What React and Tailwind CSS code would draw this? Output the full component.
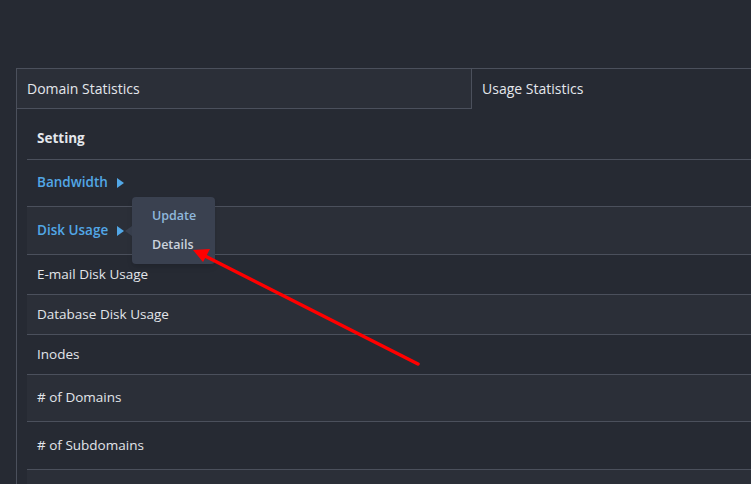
import React from "react";

const rows = [
  { label: "Bandwidth", link: true, h: "h-[47px]", bg: "bg-[#262a33]" },
  { label: "Disk Usage", link: true, h: "h-[48px]", bg: "bg-[#2b2f38]", menu: true },
  { label: "E-mail Disk Usage", h: "h-[40px]", bg: "bg-[#262a33]" },
  { label: "Database Disk Usage", h: "h-[40px]", bg: "bg-[#2b2f38]" },
  { label: "Inodes", h: "h-[40px]", bg: "bg-[#262a33]" },
  { label: "# of Domains", h: "h-[47px]", bg: "bg-[#2b2f38]" },
  { label: "# of Subdomains", h: "h-[48px]", bg: "bg-[#262a33]" },
  { label: "", h: "h-[40px]", bg: "bg-[#2b2f38]" },
];

function Tri({ className }) {
  return (
    <svg width="7" height="10" viewBox="0 0 7 10" className={className}>
      <path d="M0 0 L7 5 L0 10 Z" fill="currentColor" />
    </svg>
  );
}

export default function App() {
  return (
    <div
      className="relative w-[751px] h-[484px] overflow-hidden bg-[#262a33] text-[#e4e7ec]"
      style={{ fontFamily: '"Open Sans", "Noto Sans", sans-serif' }}
    >
      <div className="pt-[68px] pl-4">
        <div className="w-[910px] border-t border-l border-[#4b505c]">
          <div className="flex h-10">
            <div className="w-[455px] flex items-center px-[10px] pb-[1px] bg-[#2b2f38] border-r border-b border-[#4b505c] text-[14px] font-medium">
              Domain Statistics
            </div>
            <div className="flex-1 flex items-center px-[10px] pb-[1px] text-[14px] font-medium">
              Usage Statistics
            </div>
          </div>
          <div className="pt-[10px] pl-[10px]">
            <div className="h-[41px] flex items-center px-[10px] pb-[1px] border-b border-[#4b505c] text-[13.5px] font-bold">
              Setting
            </div>
            {rows.map((r, i) => (
              <div
                key={i}
                className={`relative ${r.h} ${r.bg} flex items-center px-[10px] pb-[1px] border-b border-[#4b505c] text-[13.5px]`}
              >
                {r.link ? (
                  <span className="flex items-center gap-[9px] text-[#52a7e6] font-semibold">
                    {r.label}
                    <Tri className="text-[#52a7e6] mt-[1px]" />
                  </span>
                ) : (
                  <span className="font-medium text-[#e2e5ea]">{r.label}</span>
                )}
                {r.menu && (
                  <div className="absolute left-[98px] top-[-10px] z-10 flex items-center">
                    <svg width="7" height="10" viewBox="0 0 7 10" className="text-[#3a4150] mt-[1px] shrink-0">
                      <path d="M7 0 L0 5 L7 10 Z" fill="currentColor" />
                    </svg>
                    <div className="w-[83px] h-[67px] rounded-[4px] bg-[#3a4150] flex flex-col justify-center gap-[10px] pl-[20px] text-[12.5px] font-semibold shadow-md">
                      <span className="text-[#8fb8dc]">Update</span>
                      <span className="text-[#cbd3de]">Details</span>
                    </div>
                  </div>
                )}
              </div>
            ))}
          </div>
        </div>
      </div>
      <svg
        className="absolute left-0 top-0 z-20 pointer-events-none"
        width="751"
        height="484"
      >
        <line x1="418" y1="364" x2="205" y2="256" stroke="#ff0000" strokeWidth="3.5" strokeLinecap="round" />
        <polygon points="193,250 210,249 203,262" fill="#ff0000" />
      </svg>
    </div>
  );
}
